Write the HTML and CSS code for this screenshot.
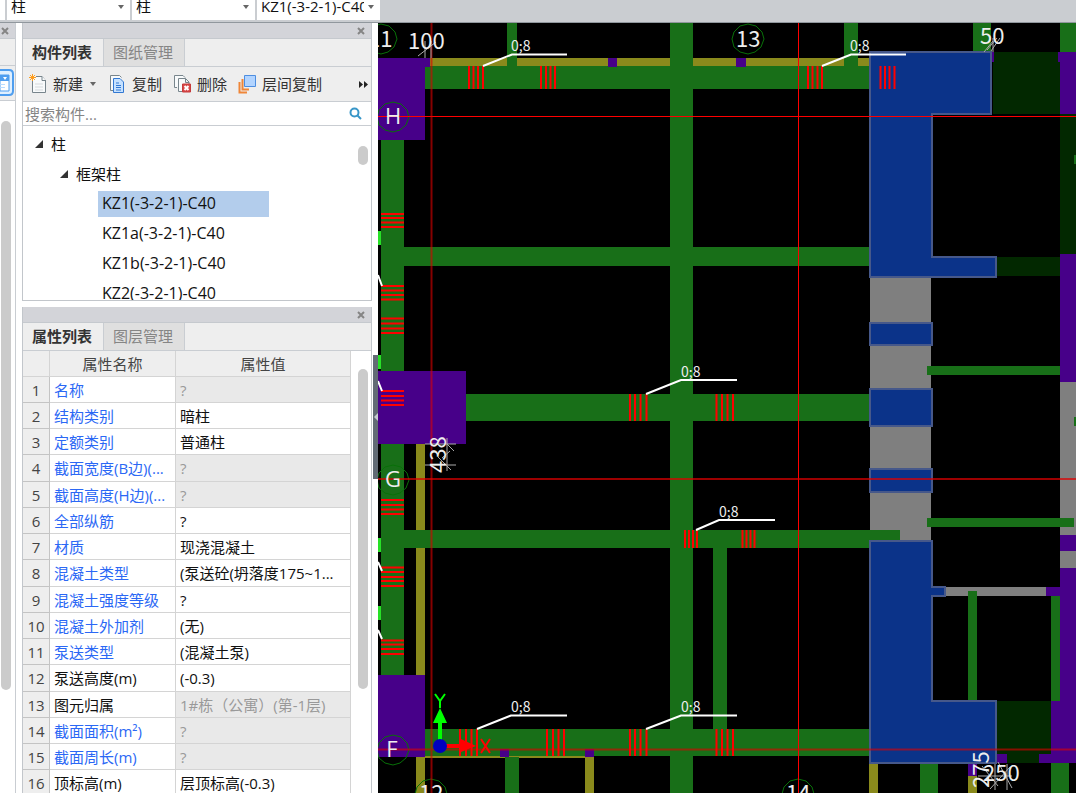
FILE: index.html
```html
<!DOCTYPE html>
<html lang="zh-CN">
<head>
<meta charset="utf-8">
<title>构件列表</title>
<link rel="stylesheet" href="styles.css">
</head>
<body>
<header class="topbar">
  <span class="combo combo-stub"></span>
  <span class="combo"><select aria-label="构件大类"><option>柱</option></select><svg class="caret" viewBox="0 0 8 5"><path d="M1 0h6L4 4z"/></svg></span>
  <span class="combo"><select aria-label="构件类型"><option>柱</option></select><svg class="caret" viewBox="0 0 8 5"><path d="M1 0h6L4 4z"/></svg></span>
  <span class="combo"><select aria-label="构件"><option>KZ1(-3-2-1)-C40</option></select><svg class="caret" viewBox="0 0 8 5"><path d="M1 0h6L4 4z"/></svg></span>
</header>
<main class="workspace">
  <aside class="nav">
    <div class="titlebar"><button class="close" aria-label="关闭"><svg viewBox="0 0 8 8"><path d="M1 1l6 6M7 1L1 7"/></svg></button></div>
    <div class="nav-tabs"></div>
    <div class="nav-tools"><button class="nav-btn" aria-label="视图"><svg viewBox="0 0 14 28"><path class="nav-frame" d="M0 1h9q4 0 4 4v17q0 4-4 4H0"/><path class="nav-doc" d="M0 6h9v16H0z"/><path class="nav-head" d="M0 6h9v6H0z"/><path class="nav-tick" d="M3 8h4L5 11z"/><path class="nav-rule" d="M0 15h5v1H0zM0 18h5v1H0z"/></svg></button></div>
    <div class="nav-body"><div class="thumb"></div></div>
  </aside>
  <div class="panels">
    <section class="panel panel-list">
      <div class="titlebar"><button class="close" aria-label="关闭"><svg viewBox="0 0 8 8"><path d="M1 1l6 6M7 1L1 7"/></svg></button></div>
      <div class="tabs"><button class="tab active">构件列表</button><button class="tab">图纸管理</button></div>
      <div class="tools">
        <button class="tool"><svg class="icon" viewBox="0 0 20 20"><path class="page" d="M3.500 5v13.500h13V6.500L13 2.500H7"/><path class="page" d="M13 2.500v4h4"/><path class="pale" d="M6 10h8M6 13h8M6 16h8"/><path class="spark" d="M3.500 0v7M0 3.500h7M1 1l5 5M6 1L1 6"/></svg>新建<svg class="drop" viewBox="0 0 8 5"><path d="M1 0h6L4 4z"/></svg></button>
        <button class="tool"><svg class="icon" viewBox="0 0 20 20"><path class="page" d="M5 16.500H2.500v-15h9l2 2"/><path class="copy" d="M5.500 4.500H12l3.500 3.500v10.500h-10z"/><path class="blue" d="M8 9h3M8 11.500h5M8 13.500h5M8 16h5"/></svg>复制</button>
        <button class="tool"><svg class="icon" viewBox="0 0 20 20"><path class="page" d="M4 13.500H1.500v-12H10l2 2"/><path class="page" d="M9 17.500H5.500v-13h7l3.500 3.500v2M12.500 4.500v4H16"/><path class="del" d="M9.500 10h8v8h-8z"/><path class="cross" d="M11.500 12l4 4M15.500 12l-4 4"/></svg>删除</button>
        <button class="tool"><svg class="icon" viewBox="0 0 20 20"><path class="orange" d="M1.500 8v10.500H9M4.500 5v10.500H11"/><path class="layer" d="M6.500 1.500h11v11h-11z"/></svg>层间复制</button>
        <button class="more" aria-label="更多"><svg viewBox="0 0 10 7"><path d="M0 0l4 3.500L0 7zM5 0l4 3.500L5 7z"/></svg></button>
      </div>
      <div class="search"><input type="text" placeholder="搜索构件..." aria-label="搜索构件"><svg viewBox="0 0 14 14"><circle cx="5.500" cy="5.500" r="4"/><path d="M8.500 8.500L12 12"/></svg></div>
      <div class="tree">
        <ul>
          <li class="lv1"><svg viewBox="0 0 8 8"><path d="M8 0v8H0z"/></svg>柱</li>
          <li class="lv2"><svg viewBox="0 0 8 8"><path d="M8 0v8H0z"/></svg>框架柱</li>
          <li class="lv3 selected">KZ1(-3-2-1)-C40</li>
          <li class="lv3">KZ1a(-3-2-1)-C40</li>
          <li class="lv3">KZ1b(-3-2-1)-C40</li>
          <li class="lv3">KZ2(-3-2-1)-C40</li>
        </ul>
        <div class="thumb"></div>
      </div>
    </section>
    <section class="panel panel-props">
      <div class="titlebar"><button class="close" aria-label="关闭"><svg viewBox="0 0 8 8"><path d="M1 1l6 6M7 1L1 7"/></svg></button></div>
      <div class="tabs"><button class="tab active">属性列表</button><button class="tab">图层管理</button></div>
      <div class="props">
        <table>
          <thead><tr><th class="num"></th><th class="name">属性名称</th><th>属性值</th></tr></thead>
          <tbody>
            <tr><td>1</td><td>名称</td><td class="off">?</td></tr>
            <tr><td>2</td><td>结构类别</td><td>暗柱</td></tr>
            <tr><td>3</td><td>定额类别</td><td>普通柱</td></tr>
            <tr><td>4</td><td>截面宽度(B边)(...</td><td class="off">?</td></tr>
            <tr><td>5</td><td>截面高度(H边)(...</td><td class="off">?</td></tr>
            <tr><td>6</td><td>全部纵筋</td><td>?</td></tr>
            <tr><td>7</td><td>材质</td><td>现浇混凝土</td></tr>
            <tr><td>8</td><td>混凝土类型</td><td>(泵送砼(坍落度175~1...</td></tr>
            <tr><td>9</td><td>混凝土强度等级</td><td>?</td></tr>
            <tr><td>10</td><td>混凝土外加剂</td><td>(无)</td></tr>
            <tr><td>11</td><td>泵送类型</td><td>(混凝土泵)</td></tr>
            <tr class="own"><td>12</td><td>泵送高度(m)</td><td>(-0.3)</td></tr>
            <tr class="own"><td>13</td><td>图元归属</td><td class="off">1#栋（公寓）(第-1层)</td></tr>
            <tr><td>14</td><td>截面面积(m²)</td><td class="off">?</td></tr>
            <tr><td>15</td><td>截面周长(m)</td><td class="off">?</td></tr>
            <tr class="own"><td>16</td><td>顶标高(m)</td><td>层顶标高(-0.3)</td></tr>
          </tbody>
        </table>
        <div class="gutter"><div class="thumb"></div></div>
      </div>
    </section>
    <button class="handle" aria-label="折叠"><svg viewBox="0 0 5 8"><path d="M5 0v8L1 4z"/></svg></button>
  </div>
  <svg class="canvas" viewBox="378 23 698 770" preserveAspectRatio="xMinYMin slice" role="img" aria-label="结构平面图">
    <g class="olive">
      <path d="M430 58h439v8H430zM416 444h9v231h-9zM416 757h9v36h-9zM585 757h9v36h-9zM869 764h9v29h-9zM968 776h9v17h-9zM425 756h169v2H425z"/>
    </g>
    <g class="beam">
      <path d="M381 140h23v231h-23zM381 444h23v231h-23zM507 23h10v43h-10zM670 23h23v770h-23zM844 23h14v43h-14zM713 548h14v181h-14zM505 757h14v36h-14zM973 23h18v29h-18zM1060 23h16v29h-16zM920 764h18v29h-18zM1051 763h18v30h-18z"/>
      <path d="M425 66h444v23H425zM404 247h465v19H404zM466 394h403v27H466zM404 530h465v18H404zM425 729h444v27H425z"/>
    </g>
    <path class="dark" d="M993 52h67v62h-67zM1060 113h16v141h-16zM997 257h63v19h-63zM997 701h54v62h-54z"/>
    <path class="column" d="M378 58h52v9h-5v73h-47zM378 371h88v73h-88zM378 675h47v82h-47zM608 58h9v9h-9zM736 58h10v9h-10zM991 52h3v10h-3zM1058 52h18v62h-16V62h-2zM1060 254h16v128h-16zM1060 535h16v16h-16zM1060 568h16v195h-37v-9h12v-53h9V596h-14v-9h14zM997 754h10v9h-10zM968 764h9v12h-9zM500 749h9v8h-9zM585 749h9v8h-9z"/>
    <path class="wall" d="M870 278h61v263h-61zM1060 382h16v153h-16zM1060 551h16v17h-16zM945 587h101v9H945z"/>
    <path class="beam" d="M869 530h31v18h-31zM927 366h133v9H927zM927 518h147v9H927zM968 591h9v110h-9zM1051 596h9v105h-9zM1074 155h2v9h-2zM1074 417h2v9h-2z"/>
    <path class="shear" d="M870 52h121v62h-59v143h64v20H870zM870 323h62v22h-62zM870 389h62v37h-62zM870 469h62v23h-62zM870 541h62v46h13v9h-13v105h64v62H870z"/>
    <path class="bright" d="M378 231h3v14h-3zM378 355h3v14h-3zM378 538h3v14h-3zM378 606h3v14h-3z"/>
    <g class="ring">
      <path id="ring" d="M381 24l8 2 6 6 2 7-3 8-6 5-7 2-8-2-6-5-2-8 2-7 6-6z"/>
      <use href="#ring" x="367"/><use href="#ring" x="12" y="78"/><use href="#ring" x="12" y="441"/><use href="#ring" x="12" y="711"/><use href="#ring" x="50" y="755"/><use href="#ring" x="417" y="755"/>
    </g>
    <path class="axis" d="M378 116.500h698M798.500 23v770"/>
    <path class="axis-mid" d="M378 479h698"/>
    <path class="axis-soft" d="M431.500 23v770M378 749.500h698"/>
    <g class="stirrup">
      <path d="M469 66v23M473.500 66v23M478 66v23M483 66v23M541 66v23M546 66v23M550.500 66v23M555 66v23M808 66v23M812.500 66v23M817.500 66v23M822 66v23M880.500 66v23M885 66v23M889.500 66v23M894.500 66v23"/>
      <path d="M630 394v27M635 394v27M640.500 394v27M646.500 394v27M716.500 394v27M722 394v27M727.500 394v27M733 394v27M685 530v18M689 530v18M693 530v18M697 530v18M742.500 530v18M746.500 530v18M750.500 530v18M754.500 530v18"/>
      <path d="M460 729v27M466 729v27M471.500 729v27M477 729v27M547 729v27M553 729v27M558.500 729v27M564 729v27M630 729v27M635 729v27M640.500 729v27M646.500 729v27M716.500 729v27M722 729v27M727.500 729v27M733 729v27"/>
      <path d="M381 214h23M381 218h23M381 222.500h23M381 227h23M381 286h23M381 290.500h23M381 295h23M381 299.500h23M381 318.500h23M381 323.500h23M381 328.500h23M381 333h23M381 391h23M381 396h23M381 400.500h23M381 405h23M381 500h23M381 505h23M381 509.500h23M381 514h23M381 567.500h23M381 572h23M381 577h23M381 581h23M381 586h23M381 640.500h23M381 644.500h23M381 649h23M381 654h23"/>
    </g>
    <path class="leader" d="M483 66l29-11.500h55M822 66l29-11.500h55M646 394l35-14h56M696 530l23-10h56M477 729l34-13.500h56M646 729l35-13.500h56M378 275l4 11M378 381l4 10M378 562l4 9M378 630l4 9"/>
    <g class="label">
      <text x="511" y="51">0;8</text><text x="850" y="51">0;8</text><text x="681" y="377">0;8</text><text x="719" y="517">0;8</text><text x="511" y="712">0;8</text><text x="681" y="712">0;8</text>
    </g>
    <path class="dim" d="M425 41v17M431 41v17M418 56l18-14M425 444h31M425 465h31M447 438v33M438 457l13 13M447 444l7 7M442 458l8-7M987 50l10-12M993 38v14M984 52l9-11M991 51l9-13M978 776h34M995 764v26M1007 764v26M982 766l16 20M998 762l14 26M990 789l20-22"/>
    <g class="digits">
      <text x="368" y="47">11</text><text x="408" y="49">100</text><text x="736" y="47">13</text><text x="980" y="44">50</text><text x="419" y="801">12</text><text x="786" y="801">14</text><text x="983" y="781">250</text>
      <text transform="translate(446 473) rotate(-90)">438</text><text transform="translate(989 788) rotate(-90)">275</text>
    </g>
    <g class="mark"><text x="393" y="124">H</text><text x="393" y="487">G</text><text x="392" y="757">F</text></g>
    <g class="ucs">
      <path class="ux" d="M445 744h16v-5l15 7-15 6v-4h-16z"/><path class="uy" d="M438 742v-19h-5l7-15 7 15h-5v19z"/><circle cx="440" cy="746" r="7"/>
      <path class="uyl" d="M435 694l5 7 5-7M440 701v7"/><path class="uxl" d="M481 739l9 14M490 739l-9 14"/>
    </g>
  </svg>
</main>
</body>
</html>
```

FILE: styles.css
```css
* { box-sizing: border-box; }

body {
  margin: 0;
  height: 100vh;
  display: flex;
  flex-direction: column;
  overflow: hidden;
  background: #fff;
  color: #111;
  font: 15px/20px "Open Sans", "Noto Sans CJK SC", sans-serif;
}

button {
  margin: 0;
  padding: 0;
  border: 0;
  background: none;
  color: inherit;
  font: inherit;
}

/* Top selector bar */
.topbar {
  flex: none;
  height: 23px;
  display: flex;
  gap: 2px;
  padding-bottom: 2px;
  background: #cacdd1;
  border-bottom: 1px solid #90979d;
}
.combo {
  position: relative;
  flex: none;
  width: 123px;
  overflow: hidden;
  background: #fff;
}
.combo-stub { width: 5px; }
.combo select {
  display: block;
  appearance: none;
  width: 107px;
  height: 26px;
  margin-top: -7px;
  padding: 0 0 0 4px;
  border: 0;
  background: #fff;
  color: #111;
  font: inherit;
  text-overflow: clip;
}
.caret {
  position: absolute;
  right: 5px;
  top: 5px;
  width: 8px;
  height: 5px;
  fill: #666;
}

.workspace {
  flex: 1;
  min-height: 0;
  display: flex;
}

/* Shared panel parts */
.titlebar {
  flex: none;
  height: 16px;
  display: flex;
  align-items: center;
  justify-content: flex-end;
  padding-right: 6px;
  background: #d3d4d9;
  border-bottom: 1px solid #c5c9ce;
}
.close { width: 8px; height: 8px; display: flex; }
.close svg { width: 8px; height: 8px; stroke: #858585; stroke-width: 2; }
.thumb { width: 10px; border-radius: 5px; background: #cbcbcb; }

/* Left strip */
.nav {
  flex: none;
  width: 16px;
  display: flex;
  flex-direction: column;
  border-right: 1px solid #c9cdd2;
}
.nav-tabs { height: 27px; background: #eee; border-bottom: 1px solid #c9cdd2; }
.nav-tools { height: 35px; padding-top: 3px; background: #eee; border-bottom: 1px solid #c9cdd2; }
.nav-btn { display: flex; }
.nav-btn svg { width: 14px; height: 28px; }
.nav-frame { fill: #e0f0ff; stroke: #4f9eef; stroke-width: 2; }
.nav-doc { fill: #fff; stroke: #4f9eef; }
.nav-head { fill: #4f9eef; }
.nav-tick { fill: #fff; }
.nav-rule { fill: #b9dcff; }
.nav-body { flex: 1; padding: 20px 0 103px 1px; display: flex; }

/* Panel column */
.panels {
  position: relative;
  flex: none;
  width: 362px;
  display: flex;
  flex-direction: column;
  gap: 6px;
  padding: 0 6px;
}
.panel {
  display: flex;
  flex-direction: column;
  border: solid #c2c6cb;
  border-width: 0 1px;
}
.panel-list { flex: none; height: 278px; border-bottom-width: 1px; }
.panel-props { flex: 1; min-height: 0; }
.tabs {
  flex: none;
  height: 28px;
  display: flex;
  background: #eee;
  border-bottom: 1px solid #c9cdd2;
}
.tab {
  width: 81px;
  padding: 0 2px 2px 0;
  border-right: 1px solid #c9cdd2;
}
.tab:not(.active) { background: #dfdfdf; color: #858585; }
.tab.active { font-weight: 700; color: #333; }

.tools {
  flex: none;
  height: 35px;
  display: flex;
  align-items: center;
  gap: 11px;
  padding: 0 2px 0 6px;
  background: #eee;
  border-bottom: 1px solid #c9cdd2;
  color: #333;
}
.tool { display: flex; align-items: center; gap: 4px; white-space: nowrap; }
.icon { width: 20px; height: 20px; fill: none; stroke-width: 1; }
.page { fill: #f8fafb; stroke: #78858c; }
.pale { stroke: #d5d9dc; }
.spark { stroke: #ff9d1c; }
.copy { fill: #c5e1ff; stroke: #3278d2; }
.blue { stroke: #3278d2; }
.del { fill: #d94747; stroke: #c53b3b; }
.cross { stroke: #fff; stroke-width: 2; }
.orange { stroke: #ef8638; stroke-width: 2; }
.layer { fill: #b2d4ff; stroke: #4e8ee0; }
.drop { width: 8px; height: 5px; margin-left: 2px; fill: #666; }
.more { margin-left: auto; display: flex; }
.more svg { width: 10px; height: 7px; fill: #222; }

.search {
  flex: none;
  height: 24px;
  display: flex;
  align-items: center;
  padding: 0 8px 0 2px;
  border-bottom: 1px solid #c9cdd2;
}
.search input {
  flex: 1;
  min-width: 0;
  height: 22px;
  padding: 0;
  border: 0;
  outline: 0;
  background: none;
  font: inherit;
}
.search input::placeholder { color: #858585; opacity: 1; }
.search svg { width: 14px; height: 14px; fill: none; stroke: #3896c8; stroke-width: 2; }

.tree {
  flex: 1;
  min-height: 0;
  display: flex;
  justify-content: space-between;
  overflow: hidden;
  padding: 5px 3px 0 0;
}
.tree ul { margin: 0; padding: 0; list-style: none; }
.tree li { display: flex; align-items: center; height: 26px; margin-bottom: 4px; }
.tree li svg { width: 8px; height: 8px; margin-right: 8px; fill: #333; }
.tree .lv1 { margin-left: 12px; }
.tree .lv2 { margin-left: 37px; }
.tree .lv3 { width: 171px; margin-left: 75px; padding: 0 0 2px 4px; font-size: 16px; }
.tree .selected { background: #b3cdec; }
.tree .thumb { height: 19px; margin-top: 15px; }

/* Property grid */
.props { flex: 1; min-height: 0; display: flex; overflow: hidden; align-items: stretch; }
table {
  flex: 1;
  align-self: flex-start;
  table-layout: fixed;
  border-collapse: separate;
  border-spacing: 0;
}
th, td {
  height: 26px;
  padding: 0 0 0 4px;
  border: solid #d4d4d4;
  border-width: 0 1px 1px 0;
  text-align: left;
  font-weight: 400;
  line-height: 20px;
  white-space: nowrap;
  overflow: hidden;
}
tbody tr:nth-child(4n) td { height: 27px; }
th { padding: 0; background: #eee; text-align: center; color: #444; }
.num { width: 27px; }
.name { width: 126px; }
td:nth-child(1) { padding: 0; background: #eee; color: #444; text-align: center; border-color: #c4c4c4; }
td:nth-child(2) { color: #2b68f5; }
.own td:nth-child(2) { color: #111; }
td.off { background: #e9e9e9; color: #999; }
.gutter { flex: none; width: 20px; display: flex; padding: 18px 0 104px 7px; }

.handle {
  position: absolute;
  right: 0;
  top: 332px;
  width: 5px;
  height: 124px;
  display: flex;
  align-items: center;
  background: #626b75;
}
.handle svg { width: 5px; height: 8px; fill: #c5cbd0; }

/* Plan drawing */
.canvas { flex: 1; min-width: 0; height: 100%; background: #000; }
.olive { fill: #8a8a1c; }
.beam { fill: #186f18; }
.dark { fill: #022800; }
.column { fill: #470089; }
.wall { fill: #7f7f7f; }
.shear { fill: #0b3389; stroke: #46588a; stroke-width: 2; }
.bright { fill: #27e127; }
.ring { fill: none; stroke: #087008; }
.axis { stroke: #f00; }
.axis-mid { stroke: #e00000; stroke-opacity: .7; stroke-width: 2; }
.axis-soft { stroke: #e00000; stroke-opacity: .6; stroke-width: 2; }
.stirrup { stroke: #f00; stroke-width: 2; }
.leader { fill: none; stroke: #fff; stroke-width: 2; }
.dim { stroke: #aaa; }
.label { fill: #eee; font: 14px "Noto Sans CJK SC", sans-serif; }
.digits { fill: #eee; font: 22px "Noto Sans CJK SC", sans-serif; }
.mark { fill: #eee; font: 22px "Open Sans", sans-serif; text-anchor: middle; }
.ucs { fill: #0000bf; }
.ux { fill: #f00; }
.uy { fill: #0f0; }
.uxl, .uyl { fill: none; stroke: #f00; stroke-width: 2; }
.uyl { stroke: #0f0; }
```
